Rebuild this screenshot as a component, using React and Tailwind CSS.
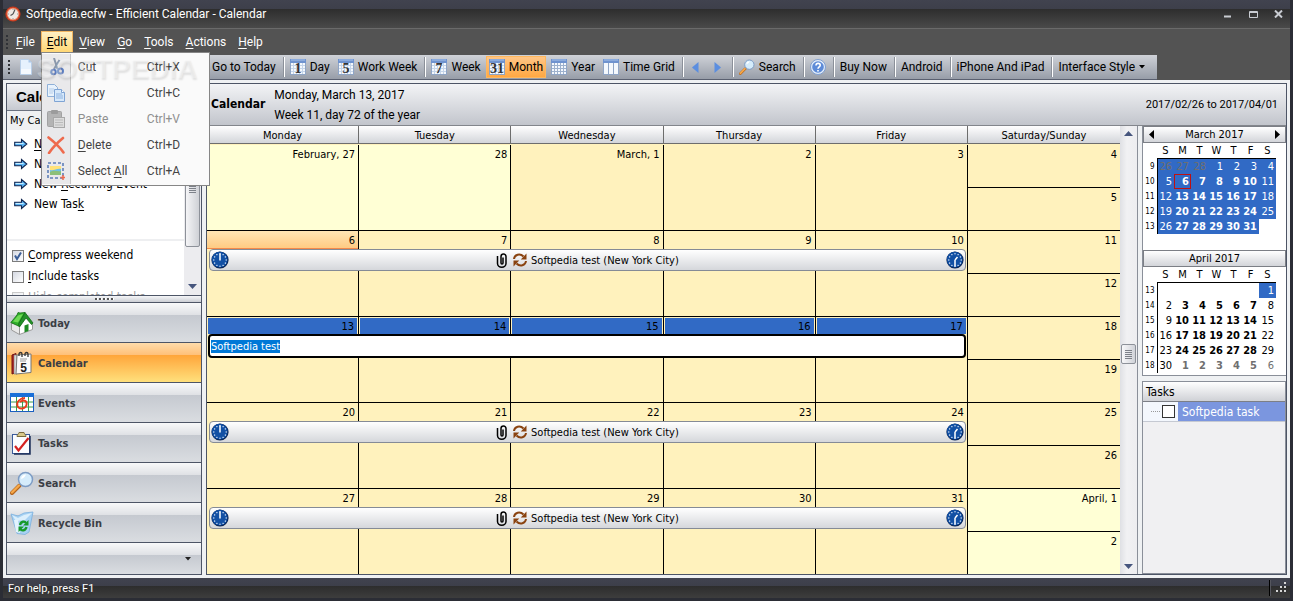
import { useEffect, useRef, useState } from 'react'
import clsx from 'clsx'

const menus = ['File', 'Edit', 'View', 'Go', 'Tools', 'Actions', 'Help']

const weeks = [
  { days: ['February, 27', '28', 'March, 1', '2', '3'], weekend: ['4', '5'], pale: [0, 1] },
  { days: ['6', '7', '8', '9', '10'], weekend: ['11', '12'], event: true, today: 0 },
  { days: ['13', '14', '15', '16', '17'], weekend: ['18', '19'], editing: true },
  { days: ['20', '21', '22', '23', '24'], weekend: ['25', '26'], event: true },
  { days: ['27', '28', '29', '30', '31'], weekend: ['April, 1', '2'], event: true, paleWeekend: true },
]

const weekdays = ['Monday', 'Tuesday', 'Wednesday', 'Thursday', 'Friday', 'Saturday/Sunday']

const march = [
  ['9', 26, 27, 28, 1, 2, 3, 4],
  ['10', 5, 6, 7, 8, 9, 10, 11],
  ['11', 12, 13, 14, 15, 16, 17, 18],
  ['12', 19, 20, 21, 22, 23, 24, 25],
  ['13', 26, 27, 28, 29, 30, 31, ''],
]

const april = [
  ['13', '', '', '', '', '', '', 1],
  ['14', 2, 3, 4, 5, 6, 7, 8],
  ['15', 9, 10, 11, 12, 13, 14, 15],
  ['16', 16, 17, 18, 19, 20, 21, 22],
  ['17', 23, 24, 25, 26, 27, 28, 29],
  ['18', 30, 1, 2, 3, 4, 5, 6],
]

// Draws a label with its access key underlined
function Label({ text, at = 0 }) {
  if (at < 0) return <span>{text}</span>
  return (
    <span className="whitespace-pre">
      {text.slice(0, at)}
      <span className="underline underline-offset-2">{text[at]}</span>
      {text.slice(at + 1)}
    </span>
  )
}

/* ---------- icons ---------- */

function AppIcon() {
  return (
    <svg width="16" height="16" viewBox="0 0 16 16">
      <circle cx="8" cy="8" r="7.6" fill="#c9391c" />
      <circle cx="8" cy="8" r="6.3" fill="#e88a6b" />
      <circle cx="8" cy="8" r="5.3" fill="#efe9e4" />
      <path d="M8 8 10 3.5M8 8 5.5 9.5" stroke="#555" strokeWidth="1.2" />
      <path d="M8 3v1M8 12v1M3 8h1M12 8h1" stroke="#999" />
    </svg>
  )
}

function PageIcon() {
  return (
    <svg width="16" height="16" viewBox="0 0 16 16">
      <path d="M2.5.5h8l3 3v12h-11z" fill="#e6f1fd" stroke="#b9cfe8" />
      <path d="M10.5.5v3h3z" fill="#a9c8ea" />
      <path d="M3 10h10v5H3z" fill="#fff" opacity=".6" />
    </svg>
  )
}

function DateIcon({ label, variant }) {
  return (
    <svg width="16" height="16" viewBox="0 0 16 16" className="shrink-0">
      <rect x=".5" y=".5" width="15" height="15" fill="#f4f8fd" stroke="#8fa5c6" />
      <rect x="0" y="0" width="16" height="4" fill="#6f93cf" />
      <path d="M1 1h14" stroke="#a9c3ea" />
      {variant === 'time' ? (
        <path d="M5.5 4v11M10.5 4v11" stroke="#8fa5c6" />
      ) : (
        <path d="M1 6.5h14M1 9.5h14M1 12.5h14M3.5 4v11M6.5 4v11M9.5 4v11M12.5 4v11" stroke={variant === 'year' ? '#9db1cd' : '#c5d5ea'} />
      )}
      {label && (
        <text x="8" y="14" textAnchor="middle" fontFamily="Liberation Serif, serif" fontWeight="700" fontSize="14" fill="#333">
          {label}
        </text>
      )}
    </svg>
  )
}

function Magnifier({ size = 16 }) {
  return (
    <svg width={size} height={size} viewBox="0 0 24 24" className="shrink-0">
      <path d="M2 22 9.5 14.5" stroke="#b5651d" strokeWidth="4" strokeLinecap="round" />
      <path d="M2 21.5 9 14.5" stroke="#f6a94a" strokeWidth="2.4" strokeLinecap="round" />
      <circle cx="15.5" cy="8.5" r="7" fill="#d5ecfb" stroke="#7d9cc4" strokeWidth="1.5" />
      <path d="M11 8a5 5 0 0 1 5-4.5c-1 2-2 3.5-5 4.5z" fill="#fff" />
    </svg>
  )
}

function HelpIcon() {
  return (
    <svg width="16" height="16" viewBox="0 0 16 16">
      <circle cx="8" cy="8" r="7.5" fill="#e3ecf9" stroke="#7f9fd0" />
      <circle cx="8" cy="8" r="5.8" fill="#5d8bd8" />
      <path d="M6 6.5c0-3 4.2-2.7 4.2-.3C10.2 7.8 8 7.8 8 9.7M8 11v1.5" stroke="#fff" strokeWidth="1.6" fill="none" />
    </svg>
  )
}

function ScissorsIcon() {
  return (
    <svg width="18" height="18" viewBox="0 0 18 18">
      <path d="M7 0 10.5 11M12.5 2 7 11" stroke="#8b98ab" strokeWidth="2" />
      <circle cx="6.5" cy="14" r="2.2" fill="none" stroke="#5c80c4" strokeWidth="2" />
      <circle cx="13.5" cy="13" r="2.5" fill="none" stroke="#5c80c4" strokeWidth="2" />
    </svg>
  )
}

function CopyIcon() {
  return (
    <svg width="18" height="18" viewBox="0 0 18 18">
      <path d="M.5.5h7l3 3v9H.5z" fill="#e8f2fc" stroke="#8fb0d8" />
      <path d="M2 5h5M2 7h5M2 9h4" stroke="#b5cdea" />
      <path d="M7.5 5.5h7l3 3v9h-10z" fill="#d6e8fa" stroke="#7fa4d4" />
      <path d="M14.5 5.5v3h3" fill="#fff" stroke="#7fa4d4" />
      <path d="M9 10h6M9 12h7M9 14h7" stroke="#8fb3e0" />
    </svg>
  )
}

function PasteIcon() {
  return (
    <svg width="18" height="18" viewBox="0 0 18 18">
      <rect x=".5" y="1.5" width="14" height="15" rx="1" fill="#b4b4b4" stroke="#a2a2a2" />
      <rect x="4" y="0" width="7" height="4" rx="1" fill="#9c9c9c" />
      <rect x="6.5" y="7.5" width="11" height="10" fill="#dcdcdc" stroke="#a8a8a8" />
      <path d="M8 10h8M8 12.5h8M8 15h8" stroke="#bbb" />
    </svg>
  )
}

function DeleteIcon() {
  return (
    <svg width="18" height="18" viewBox="0 0 18 18">
      <path d="M1.5 1.5C6 5 12 10 16.5 16.5M16 2C10 7 6 11 2 17" stroke="#ee6a4d" strokeWidth="2.6" fill="none" strokeLinecap="round" />
    </svg>
  )
}

function SelectAllIcon() {
  return (
    <svg width="18" height="18" viewBox="0 0 18 18">
      <rect x="1" y="1" width="15" height="15" fill="none" stroke="#5d7eb8" strokeWidth="1.6" strokeDasharray="3 2" />
      <rect x="3" y="4" width="11" height="9" fill="#6fc0e8" />
      <path d="M3 4h11v3c-4-1-7 2-11 1z" fill="#ffe27a" />
      <path d="M3 10c4-3 8 0 11-1v4H3z" fill="#8cc07a" />
      <path d="M16 13v5M13.5 15.5h5" stroke="#ee6a4d" strokeWidth="1.5" />
    </svg>
  )
}

function BlueArrow() {
  return (
    <svg width="14" height="12" viewBox="0 0 14 12" className="shrink-0">
      <path d="M.7 4.2h6.8V1.5L12.8 6l-5.3 4.5V7.8H.7z" fill="#5cb6f5" stroke="#10254f" strokeWidth="1.1" />
      <path d="M1.5 5.5h8" stroke="#c8ecff" />
    </svg>
  )
}

function Clock({ end }) {
  return (
    <svg width="18" height="18" viewBox="0 0 18 18" className="shrink-0">
      <circle cx="9" cy="9" r="8.6" fill="#0a2350" />
      <circle cx="8.7" cy="8.7" r="7.9" fill="#1250a4" />
      <g fill="#e4eefb">
        {[0, 30, 60, 90, 120, 150, 180, 210, 240, 270, 300, 330].map((a) => (
          <circle key={a} cx="9" cy="2.8" r=".7" transform={`rotate(${a} 9 9)`} />
        ))}
      </g>
      <path d={end ? 'M9 9v6.5M9 9l2.5-3' : 'M9 9.5V2.5M9 9V4'} stroke="#fff" strokeWidth="1.5" />
    </svg>
  )
}

function Paperclip() {
  return (
    <svg width="12" height="15" viewBox="0 0 12 15">
      <path d="M1.5 3v7.5a4 3.5 0 0 0 8.5 0V3.5a2.5 2.5 0 0 0-5 0V10a1 1 0 0 0 2 0V4.5" fill="none" stroke="#000" strokeWidth="1.5" />
    </svg>
  )
}

function Recurrence() {
  return (
    <svg width="16" height="14" viewBox="0 0 16 14">
      <path d="M2 6C2.5 1.5 8 0 11.5 3.5" fill="none" stroke="#8a4310" strokeWidth="2" />
      <path d="M14.5.5V6.5H8.8z" fill="#8a4310" />
      <path d="M14 8c-.5 4.5-6 6-9.5 2.5" fill="none" stroke="#8a4310" strokeWidth="2" />
      <path d="M1.5 13.5V7.5h5.7z" fill="#8a4310" />
    </svg>
  )
}

function HouseIcon() {
  return (
    <svg width="24" height="24" viewBox="0 0 24 24">
      <path d="M1.5 12v7l8 4.5V14z" fill="#e9e9e9" stroke="#9a9a9a" />
      <path d="M9.5 23.5V15L16 6l6.5 7v5.5z" fill="#fff" stroke="#9a9a9a" />
      <path d="M.8 11.5 7 4l1-2.500 2 .5L15 1.500 9.500 15.500z" fill="#2fae2a" stroke="#146b14" strokeWidth=".8" />
      <path d="M15 1.5 23 12l-1.5 1.5L16 7l-6.500 9-1-3z" fill="#23912a" stroke="#146b14" strokeWidth=".8" />
      <path d="M3 10.5 8 4.500l5-1.500-5 8.500z" fill="#6fda55" />
      <path d="M14.5 14.500l4-1.500v7l-4 1.500z" fill="#1f8a25" />
    </svg>
  )
}

function CalendarBook() {
  return (
    <svg width="24" height="24" viewBox="0 0 24 24">
      <path d="M2 4 6 2.5v19L2 23z" fill="#b32020" stroke="#6b1414" />
      <path d="M4 4h3v19H4z" fill="#d9d9d9" stroke="#777" strokeWidth=".6" />
      <path d="M7 4l14-1v18.5L6 23z" fill="#fbfbfb" stroke="#777" />
      <path d="M9 5V3a1.5 1.5 0 0 1 3 0v3M15 5V3a1.5 1.5 0 0 1 3 0v3" fill="none" stroke="#333" strokeWidth="1.3" />
      <path d="M10 8h7M10 10h6" stroke="#999" />
      <text x="13.5" y="21" textAnchor="middle" fontFamily="Liberation Sans, sans-serif" fontWeight="700" fontSize="12" fill="#222">5</text>
    </svg>
  )
}

function EventsIcon() {
  return (
    <svg width="24" height="24" viewBox="0 0 24 24">
      <rect x=".5" y="3.5" width="23" height="17" fill="#fff" stroke="#1a5fc0" />
      <rect x="0" y="2" width="24" height="4" fill="#1a6fd8" />
      <path d="M1 11h22M1 16h22M6.5 6v14M12.5 6v14M18.5 6v14" stroke="#3c9a4a" />
      <path d="M15 7C10 7 6 11 7.5 15c1.5 4 8 3 9-1C17.5 10 14 8 10 11" fill="none" stroke="#ee3a1c" strokeWidth="1.8" />
    </svg>
  )
}

function TasksIcon() {
  return (
    <svg width="24" height="24" viewBox="0 0 24 24">
      <rect x="2.5" y="3.5" width="17" height="19" fill="#fbfcff" stroke="#3a5a9a" />
      <path d="M20 5v18H4" fill="none" stroke="#1d2f58" strokeWidth="1.5" />
      <path d="M7 5.5c0-2 1.5-2 2-4h5c.5 2 2 2 2 4z" fill="#d9c98a" stroke="#77683a" />
      <path d="M5 15l3.5 4.5L18.5 7" fill="none" stroke="#d42020" strokeWidth="2.2" />
    </svg>
  )
}

function BinIcon() {
  return (
    <svg width="24" height="24" viewBox="0 0 24 24">
      <path d="M1 3l7 2 6-3 9-1-4 20-4 2.5-8-1z" fill="#a8d2f3" stroke="#7bb0de" strokeWidth=".8" />
      <path d="M2 4l6 3 6-3 8-2-7 7-9 1z" fill="#dceffc" />
      <path d="M4 9l2 12 4 1-2-13z" fill="#e3f3fd" />
      <path d="M10 14c1-4 5-4 6-2M16.5 16c-1 4-5 4-6 2" fill="none" stroke="#179a2b" strokeWidth="2.4" />
      <path d="M18.5 9v5.5H13zM8.5 21v-5.5H14z" fill="#179a2b" />
    </svg>
  )
}

function Grip() {
  return (
    <span className="flex flex-col gap-[2px]">
      {[0, 1, 2, 3].map((i) => (
        <span key={i} className="w-[2px] h-[2px] bg-[#2f3136]" />
      ))}
    </span>
  )
}

/* ---------- bars ---------- */

function TitleBar() {
  return (
    <header className="flex items-center h-[29px] pl-[2px] pr-1 bg-[linear-gradient(#41434f_0,#3d3f4a_9px,#2d2d2d_9px,#4a4a4a_100%)] border-b border-[#6a6a6a] text-white">
      <AppIcon />
      <h1 className="ml-[5px]">Softpedia.ecfw - Efficient Calendar - Calendar</h1>
      <div className="ml-auto flex gap-[9px] text-[#c9ccd2]">
        <button aria-label="Minimize" className="w-4 h-4 flex items-center justify-center">
          <svg width="8" height="8"><path d="M0 6.5h7" stroke="currentColor" strokeWidth="2" /></svg>
        </button>
        <button aria-label="Maximize" className="w-4 h-4 flex items-center justify-center">
          <svg width="9" height="7"><path d="M.5.5h8v6h-8zM0 1.5h9" fill="none" stroke="currentColor" /></svg>
        </button>
        <button aria-label="Close" className="w-4 h-4 flex items-center justify-center">
          <svg width="9" height="8"><path d="M1 .5 8 7.5M8 .5 1 7.5" stroke="currentColor" strokeWidth="2" /></svg>
        </button>
      </div>
    </header>
  )
}

function EditMenu() {
  const items = [
    ['Cut', -1, 'Ctrl+X', <ScissorsIcon />],
    ['Copy', -1, 'Ctrl+C', <CopyIcon />],
    ['Paste', -1, 'Ctrl+V', <PasteIcon />],
    ['Delete', 0, 'Ctrl+D', <DeleteIcon />],
    ['Select All', 7, 'Ctrl+A', <SelectAllIcon />],
  ]
  return (
    <div role="menu" className="absolute left-0 top-[21px] z-20 w-[169px] border border-[#868686] bg-[#fafafa] py-px">
      {items.map(([text, at, keys, icon]) => (
        <button
          key={text}
          role="menuitem"
          disabled={text === 'Paste'}
          className={clsx('flex w-full h-[26px] items-center text-left', text === 'Paste' ? 'text-[#8f8f8f]' : 'text-[#444]')}
        >
          <span className="flex w-[29px] h-full items-center justify-center bg-[#e9e9eb] border-r border-[#c5c5c5]">{icon}</span>
          <span className="w-[69px] pl-[7px]"><Label text={text} at={at} /></span>
          <span className="pl-[7px]">{keys}</span>
        </button>
      ))}
      <span aria-hidden="true" className="pointer-events-none absolute -left-[5px] top-0 font-['Liberation_Sans',sans-serif] text-[28px] leading-[32px] font-bold text-white/30 [text-shadow:1px_2px_2px_rgba(0,0,0,0.10)]">
        SOFTPEDIA
      </span>
    </div>
  )
}

function MenuBar() {
  return (
    <nav className="flex items-center h-[26px] pl-[3px] text-white bg-[#535353]">
      <Grip />
      <ul className="flex ml-[2px]">
        {menus.map((m) => (
          <li key={m} className="relative">
            <button
              className={clsx(
                'h-[22px] px-[5px] border',
                m === 'Edit' ? 'border-[#f2b661] bg-[linear-gradient(#fff0c4,#ffd775)] text-black' : 'border-transparent'
              )}
            >
              <Label text={m} />
            </button>
            {m === 'Edit' && <EditMenu />}
          </li>
        ))}
      </ul>
    </nav>
  )
}

function Tool({ icon, children, active, wide, label }) {
  return (
    <button
      aria-label={label}
      className={clsx(
        'flex items-center justify-center gap-1 h-[22px] shrink-0 whitespace-nowrap',
        wide ? 'w-[20px]' : 'px-[3px]',
        active && 'bg-[linear-gradient(#ffc78a,#ffa63f)] outline outline-1 -outline-offset-1 outline-[#ffb75c]'
      )}
    >
      {icon}
      {children}
    </button>
  )
}

function Sep() {
  return <span className="ml-[2px] w-[2px] h-5 shrink-0 bg-white border-l border-[#8b9099]" />
}

function Toolbar() {
  return (
    <div className="bg-[#535353]">
      <div className="flex w-fit items-center gap-[2px] h-[25px] pl-[5px] pr-2 bg-[linear-gradient(#cfd2d8,#979da8)] border-b border-[#5a6070] text-black">
        <Grip />
        <span className="flex w-[195px] pl-[3px]"><Tool icon={<PageIcon />} label="New" /></span>
        <Tool>Go to Today</Tool>
        <Sep />
        <Tool icon={<DateIcon label="1" />}>Day</Tool>
        <Tool icon={<DateIcon label="5" />}>Work Week</Tool>
        <Sep />
        <Tool icon={<DateIcon label="7" />}>Week</Tool>
        <Tool icon={<DateIcon label="31" />} active>Month</Tool>
        <Tool icon={<DateIcon variant="year" />}>Year</Tool>
        <Tool icon={<DateIcon variant="time" />}>Time Grid</Tool>
        <Sep />
        <Tool wide label="Back" icon={<svg width="7" height="11"><path d="M6.5 0v11L0 5.5z" fill="#5b8ee0" /></svg>} />
        <Tool wide label="Forward" icon={<svg width="7" height="11"><path d="M.5 0v11L7 5.5z" fill="#5b8ee0" /></svg>} />
        <Sep />
        <Tool icon={<Magnifier />}>Search</Tool>
        <Sep />
        <Tool icon={<HelpIcon />} label="Help" />
        <Sep />
        <Tool>Buy Now</Tool>
        <Sep />
        <Tool>Android</Tool>
        <Sep />
        <Tool>iPhone And iPad</Tool>
        <Sep />
        <Tool>
          Interface Style
          <svg width="7" height="4"><path d="M0 0h6L3 3.5z" fill="#000" /></svg>
        </Tool>
      </div>
    </div>
  )
}

/* ---------- left side ---------- */

function CheckRow({ text, checked, faded }) {
  const [on, setOn] = useState(!!checked)
  return (
    <label className={clsx('relative flex items-center h-[21px] gap-1 pl-[5px]', faded && 'opacity-40')}>
      <input
        type="checkbox"
        checked={on}
        onChange={() => setOn(!on)}
        className="appearance-none w-3 h-3 border border-[#7c7c7c] bg-[linear-gradient(135deg,#d5d9e2,#fff)]"
      />
      {on && (
        <svg width="12" height="12" className="absolute left-[5px] pointer-events-none">
          <path d="M3 5.5 5 9l4-6.5" fill="none" stroke="#3c5f98" strokeWidth="2" />
        </svg>
      )}
      <Label text={text} />
    </label>
  )
}

function Sidebar() {
  const actions = [
    ['New Event', 0],
    ['New All Day Event', 4],
    ['New Recurring Event', 4],
    ['New Task', 7],
  ]
  const sections = [
    ['Today', <HouseIcon />],
    ['Calendar', <CalendarBook />],
    ['Events', <EventsIcon />],
    ['Tasks', <TasksIcon />],
    ['Search', <Magnifier size={24} />],
    ['Recycle Bin', <BinIcon />],
  ]
  return (
    <aside className="flex flex-col w-[196px] shrink-0 border border-[#4d5566] bg-white text-[11px] font-['DejaVu_Sans_Condensed','Noto_Sans',sans-serif]">
      <h2 className="h-[27px] pl-[9px] leading-[26px] shrink-0 font-['Liberation_Sans',sans-serif] text-[15px] font-bold bg-[linear-gradient(#f4f5f7,#c6c9d0)] border-b border-[#6b7280] text-black">
        Calendar
      </h2>
      <div className="flex flex-1 min-h-0 overflow-hidden">
        <div className="flex flex-col flex-1 overflow-hidden">
          <p className="h-[19px] pl-[3px] leading-[20px] shrink-0 bg-[#eff0f2]">My Calendar</p>
          <ul className="shrink-0 h-[111px] pt-1 border-b-2 border-[#eeeff1]">
            {actions.map(([text, at]) => (
              <li key={text}>
                <button className="flex items-center h-5 pl-[7px] gap-[6px] text-[12px]">
                  <BlueArrow />
                  <Label text={text} at={at} />
                </button>
              </li>
            ))}
          </ul>
          <div className="shrink-0 pt-1 text-[12px] leading-[17px]">
            <CheckRow text="Compress weekend" checked />
            <CheckRow text="Include tasks" />
            <CheckRow text="Hide completed tasks" faded />
          </div>
        </div>
        <div className="flex flex-col w-[17px] bg-[#ececef]">
          <div className="mx-px h-[136px] flex items-center justify-center border border-[#8d9199] rounded-[2px] bg-[linear-gradient(90deg,#f5f5f7,#cfd1d6)]">
            <span className="mt-5 w-[7px] h-[7px] bg-[repeating-linear-gradient(#7d8189_0_1px,transparent_1px_2px)]" />
          </div>
          <svg width="9" height="5" className="mt-auto mb-[6px] mx-auto"><path d="M0 0h9L4.5 5z" fill="#46557d" /></svg>
        </div>
      </div>
      <div className="h-[7px] shrink-0 flex items-center justify-center gap-px border-t border-[#4d5566] bg-[linear-gradient(#f5f6f8,#cbced4)]">
        {[0, 1, 2, 3, 4].map((i) => (
          <span key={i} className="w-[3px] h-[2px] border-r border-white bg-[#555]" />
        ))}
      </div>
      <nav>
        {sections.map(([text, icon]) => (
          <button
            key={text}
            className={clsx(
              'flex w-full items-center h-10 gap-1 pl-[3px] pt-px border-t border-[#4d5566] font-bold text-[#3b3e45]',
              text === 'Calendar'
                ? 'bg-[linear-gradient(#ffdcab_0,#ffc079_12px,#ffa53a_12px,#ffe07c_100%)]'
                : 'bg-[linear-gradient(#f8f9fa_0,#dfe1e5_12px,#c5c9d0_12px,#dadde1_100%)]'
            )}
          >
            {icon}
            {text}
          </button>
        ))}
        <button
          aria-label="Configure buttons"
          className="flex w-full h-8 items-center justify-end pr-[10px] border-t border-[#4d5566] bg-[linear-gradient(#f8f9fa_0,#dfe1e5_12px,#c5c9d0_12px,#dadde1_100%)]"
        >
          <svg width="6" height="4"><path d="M0 0h6L3 3.5z" fill="#222" /></svg>
        </button>
      </nav>
    </aside>
  )
}

/* ---------- month grid ---------- */

function EventBar() {
  return (
    <button className="row-start-1 col-start-1 col-span-5 self-start z-10 mt-[18px] ml-[2px] mr-[2px] h-[22px] flex items-center px-[1px] border border-[#858b96] rounded-[4px] bg-[linear-gradient(#fff,#d5d7db)]">
      <Clock />
      <span className="flex-1 flex items-center justify-center">
        <Paperclip />
        <span className="ml-1 mr-[3px]"><Recurrence /></span>
        Softpedia test (New York City)
      </span>
      <Clock end />
    </button>
  )
}

function EventEditor() {
  const ref = useRef(null)
  useEffect(() => {
    ref.current.focus()
    ref.current.select()
  }, [])
  return (
    <input
      ref={ref}
      aria-label="Event subject"
      defaultValue="Softpedia test"
      className="row-start-1 col-start-1 col-span-5 self-start z-10 mt-[17px] ml-px mr-[2px] h-6 px-[1px] border-2 border-black rounded-[4px] bg-white outline-none selection:bg-[#0078d7] selection:text-white"
    />
  )
}

function Week({ week }) {
  return (
    <div className="grid grid-cols-6 flex-1 min-h-0 border-b border-black">
      {week.days.map((d, i) => (
        <div
          key={d}
          className={clsx(
            'row-start-1 border-r border-black text-right',
            i === 0 && 'col-start-1',
            i === 1 && 'col-start-2',
            i === 2 && 'col-start-3',
            i === 3 && 'col-start-4',
            i === 4 && 'col-start-5',
            week.pale?.includes(i) ? 'bg-[#ffffd5]' : 'bg-[#fff2bd]'
          )}
        >
          <div
            className={clsx(
              'h-[18px] pr-[3px]',
              week.today === i && 'bg-[linear-gradient(#ffe6b5,#ffcb83)] border-b border-[#f58a4a]',
              week.editing ? 'bg-[#316ac5] border border-[#fff2bd] leading-[18px]' : 'leading-[20px]'
            )}
          >
            {d}
          </div>
        </div>
      ))}
      <div className={clsx('row-start-1 col-start-6 flex flex-col text-right leading-[20px]', week.paleWeekend ? 'bg-[#ffffd5]' : 'bg-[#fff2bd]')}>
        <div className="flex-1 pr-[3px] border-b border-black">{week.weekend[0]}</div>
        <div className="flex-1 pr-[3px]">{week.weekend[1]}</div>
      </div>
      {week.event && <EventBar />}
      {week.editing && <EventEditor />}
    </div>
  )
}

function MonthView() {
  return (
    <section className="flex flex-1 min-w-0">
      <div className="flex flex-col flex-1 min-w-0 overflow-hidden text-black">
        <div className="grid grid-cols-6 h-[18px] shrink-0 text-center leading-[19px] border-b border-[#6d6d6d] bg-[linear-gradient(#fff,#d3d5da)]">
          {weekdays.map((d) => (
            <div key={d} className="border-r border-[#6d6d6d] last:border-r-0">{d}</div>
          ))}
        </div>
        <div className="flex flex-col flex-1 min-h-0 pt-px -mb-px bg-[#fff2bd]">
          {weeks.map((w) => (
            <Week key={w.days[0]} week={w} />
          ))}
        </div>
      </div>
      <div className="flex flex-col items-center w-[17px] shrink-0 bg-[linear-gradient(90deg,#dfe0e4,#f1f1f3_40%,#ededf0)]">
        <svg width="9" height="5" className="mt-[5px]"><path d="M0 5h9L4.5 0z" fill="#46557d" /></svg>
        <div className="flex-1 flex flex-col justify-center w-[15px] pt-2">
          <div className="h-[20px] flex items-center justify-center border border-[#8d9199] rounded-[2px] bg-[linear-gradient(90deg,#f8f8fa,#d0d2d8)]">
            <span className="w-[7px] h-[9px] bg-[repeating-linear-gradient(#7d8189_0_1px,transparent_1px_2px)]" />
          </div>
        </div>
        <svg width="9" height="5" className="mb-[5px]"><path d="M0 0h9L4.5 5z" fill="#46557d" /></svg>
      </div>
    </section>
  )
}

/* ---------- right side ---------- */

function MiniMonth({ title, rows, selected, muted, nav, boxed }) {
  return (
    <div>
      <div className="flex items-center justify-between h-[17px] px-[5px] border border-[#7c7f86] bg-[linear-gradient(#fff,#d3d5da)]">
        {nav ? <button aria-label="Previous month"><svg width="5" height="9"><path d="M5 0v9L0 4.5z" /></svg></button> : <span />}
        <span className="text-[11px]">{title}</span>
        {nav ? <button aria-label="Next month"><svg width="5" height="9"><path d="M0 0v9l5-4.5z" /></svg></button> : <span />}
      </div>
      <table className="border-collapse table-fixed w-[133px] text-right leading-[15px]">
        <thead>
          <tr>
            <th className="w-[14px] p-0" />
            {['S', 'M', 'T', 'W', 'T', 'F', 'S'].map((d, i) => (
              <th key={i} className="p-0 font-normal text-center border-b border-black">{d}</th>
            ))}
          </tr>
        </thead>
        <tbody>
          {rows.map((r, y) => (
            <tr key={y}>
              <th className="p-0 pr-[2px] h-[15px] font-normal text-[8px] leading-[15px] border-r border-black">{r[0]}</th>
              {r.slice(1).map((d, x) => {
                const sel = selected(d, y, x)
                const dim = muted(y, x)
                const busy = x > 0 && x < 6 && y > 0
                return (
                  <td
                    key={x}
                    className={clsx(
                      'p-0 pr-[2px]',
                      sel && 'bg-[#316ac5]',
                      dim ? 'text-[#6f6f6f]' : sel ? 'text-white' : 'text-black',
                      busy && 'font-bold',
                      boxed === d && y === 1 && 'outline outline-1 -outline-offset-1 outline-[#c01010]'
                    )}
                  >
                    {d}
                  </td>
                )
              })}
            </tr>
          ))}
        </tbody>
      </table>
    </div>
  )
}

function RightPane() {
  return (
    <aside className="flex flex-col w-[149px] shrink-0 pl-1 border-l border-[#8a8f99] bg-[#eff1f3]">
      <div className="h-[250px] shrink-0 flex flex-col gap-4 bg-white border-l border-b border-[#8a8f99]">
        <MiniMonth title="March 2017" rows={march} selected={(d) => d !== ''} muted={(y, x) => y === 0 && x < 3} nav boxed={6} />
        <MiniMonth title="April 2017" rows={april} selected={(d, y) => y === 0 && d === 1} muted={(y, x) => y === 5 && x > 0} />
      </div>
      <div className="flex-1 mt-[5px] border border-[#8a8f99] bg-[#f0f0f2]">
        <h3 className="h-5 pl-[3px] leading-[20px] text-[12px] border-b border-[#7c7f86] bg-[linear-gradient(#fff,#cfd1d6)]">Tasks</h3>
        <label className="flex items-center h-5 bg-[#f3f7fd] border-b border-[#c5c9d2]">
          <span className="ml-2 w-[9px] border-t border-dotted border-[#999]" />
          <input type="checkbox" className="ml-[2px] appearance-none w-[13px] h-[13px] border border-[#333] bg-white" />
          <span className="ml-[3px] flex-1 h-full pl-[4px] leading-[20px] text-[12px] text-white bg-[#7b96df]">Softpedia task</span>
        </label>
      </div>
    </aside>
  )
}

export default function App() {
  return (
    <div className="flex flex-col h-screen bg-[#2b2d35] px-[3px] pb-[3px] text-[12px] leading-[15px] font-['Roboto',sans-serif] cursor-default overflow-hidden">
      <TitleBar />
      <MenuBar />
      <Toolbar />
      <main className="flex flex-1 min-h-0 gap-[4px] bg-[#eff1f3] p-[3px]">
        <Sidebar />
        <div className="flex flex-col flex-1 min-w-0 border border-[#4d5566] text-[11px] font-['DejaVu_Sans_Condensed','Noto_Sans',sans-serif]">
          <div className="flex items-center h-[42px] shrink-0 pl-1 pr-2 bg-[linear-gradient(#f3f4f6,#c2c5cc)] border-b border-[#83868c] text-[12px] font-['Roboto',sans-serif]">
            <h2 className="font-bold text-[12px] font-['DejaVu_Sans_Condensed','Noto_Sans',sans-serif]">Calendar</h2>
            <div className="ml-[9px] leading-5">
              <p>Monday, March 13, 2017</p>
              <p>Week 11, day 72 of the year</p>
            </div>
            <p className="ml-auto text-[11px]">2017/02/26 to 2017/04/01</p>
          </div>
          <div className="flex flex-1 min-h-0">
            <MonthView />
            <RightPane />
          </div>
        </div>
      </main>
      <footer className="flex items-center h-5 shrink-0 pl-[5px] pr-[3px] text-[11px] text-white bg-[linear-gradient(#41434f_0,#3d3f4a_8px,#2d2d2d_8px,#3d3d3d_100%)]">
        <span>For help, press F1</span>
        <span className="ml-auto mr-1 h-4 border-l border-black border-r border-r-[#55565e]" />
        <svg width="12" height="12" fill="#d5d5d5">
          <path d="M9 0h2v2H9zM5 4h2v2H5zM9 4h2v2H9zM1 8h2v2H1zM5 8h2v2H5zM9 8h2v2H9z" />
        </svg>
      </footer>
    </div>
  )
}
